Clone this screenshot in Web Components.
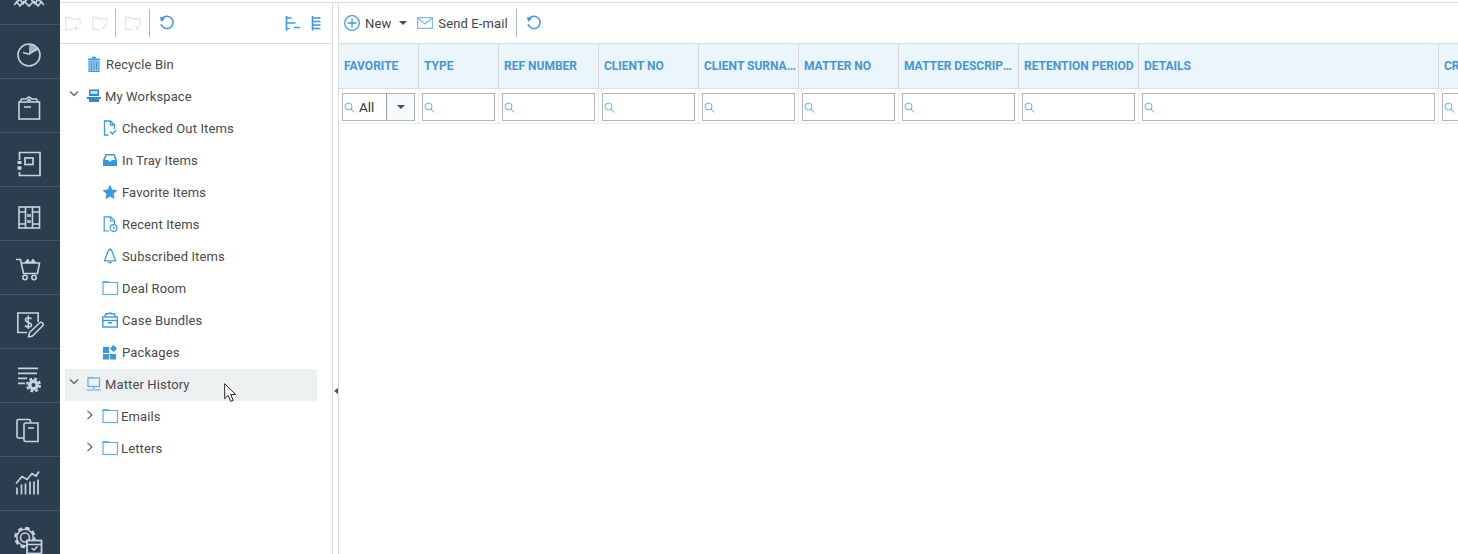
<!DOCTYPE html>
<html lang="en">
<head>
<meta charset="utf-8">
<title>Matter History</title>
<style>
html,body{margin:0;height:100%;background:#fff;overflow:hidden}
body{font-family:Roboto,"Liberation Sans",sans-serif;font-size:13px;color:#444}
</style>
</head>
<body>
<x-app>
  <x-rail slot="rail">
    <x-rail-item name="crown" first></x-rail-item>
    <x-rail-item name="clock"></x-rail-item>
    <x-rail-item name="box"></x-rail-item>
    <x-rail-item name="notebook"></x-rail-item>
    <x-rail-item name="books"></x-rail-item>
    <x-rail-item name="cart"></x-rail-item>
    <x-rail-item name="invoice"></x-rail-item>
    <x-rail-item name="listgear"></x-rail-item>
    <x-rail-item name="docs"></x-rail-item>
    <x-rail-item name="chart"></x-rail-item>
    <x-rail-item name="gearcal"></x-rail-item>
  </x-rail>
  <x-tree-panel slot="tree">
    <x-toolbar>
      <x-icon name="foldernew" style="margin-left:5px"></x-icon>
      <x-icon name="folderedit" style="margin-left:11px"></x-icon>
      <x-sep style="margin:0 9px 0 7px"></x-sep>
      <x-icon name="folderdel"></x-icon>
      <x-sep style="margin:0 9px 0 8px"></x-sep>
      <x-icon name="refresh"></x-icon>
      <x-icon name="collapse" style="margin-left:auto"></x-icon>
      <x-icon name="expand" style="margin:0 5px 0 10px"></x-icon>
    </x-toolbar>
    <x-tree>
      <x-tree-row icon="bin" leaf>Recycle Bin</x-tree-row>
      <x-tree-row icon="workspace" chevron="down">My Workspace</x-tree-row>
      <x-tree-row level="1" icon="checked" leaf>Checked Out Items</x-tree-row>
      <x-tree-row level="1" icon="tray" leaf>In Tray Items</x-tree-row>
      <x-tree-row level="1" icon="star" leaf>Favorite Items</x-tree-row>
      <x-tree-row level="1" icon="recent" leaf>Recent Items</x-tree-row>
      <x-tree-row level="1" icon="bell" leaf>Subscribed Items</x-tree-row>
      <x-tree-row level="1" icon="folder" leaf>Deal Room</x-tree-row>
      <x-tree-row level="1" icon="casebox" leaf>Case Bundles</x-tree-row>
      <x-tree-row level="1" icon="packages" leaf>Packages</x-tree-row>
      <x-tree-row icon="monitor" chevron="down" active>Matter History</x-tree-row>
      <x-tree-row level="1" icon="folder" chevron="right">Emails</x-tree-row>
      <x-tree-row level="1" icon="folder" chevron="right">Letters</x-tree-row>
    </x-tree>
  </x-tree-panel>
  <x-splitter slot="split"></x-splitter>
  <x-grid-panel slot="main">
    <x-toolbar>
      <x-icon name="plus" style="margin-left:5px"></x-icon>
      <x-label style="margin-left:5px">New</x-label>
      <x-caret style="margin-left:8px"></x-caret>
      <x-icon name="mail" style="margin-left:10px"></x-icon>
      <x-label style="margin-left:5px">Send E-mail</x-label>
      <x-sep style="margin:0 9px 0 8px"></x-sep>
      <x-icon name="refresh"></x-icon>
    </x-toolbar>
    <x-data-grid>
      <x-col w="80" filter="select">Favorite</x-col>
      <x-col w="80">Type</x-col>
      <x-col w="100">Ref Number</x-col>
      <x-col w="100">Client No</x-col>
      <x-col w="100">Client Surname</x-col>
      <x-col w="100">Matter No</x-col>
      <x-col w="120">Matter Description</x-col>
      <x-col w="120">Retention Period</x-col>
      <x-col w="300">Details</x-col>
      <x-col w="120">Cr</x-col>
    </x-data-grid>
  </x-grid-panel>
  <x-cursor slot="over"></x-cursor>
</x-app>

<script>
const S = 'fill="none" stroke="currentColor"';
const F = 'fill="currentColor"';
const B = 'color:#3a98e0';
const ICONS = {
  /* left rail, 24 box */
  crown:`<g ${S} stroke-width="1.600" transform="translate(0 -8)"><path d="M-3 13 3 7 6 12 12 5 18 12 21 7 27 13"/><path d="M-1 9 3 14 7 9M7 9 12 14 17 9M17 9 21 14 25 9"/></g>`,
  clock:`<g ${S} stroke-width="1.600"><circle cx="12" cy="12" r="11"/><path d="M6 9.600 12 11.200 20 6"/></g><path ${F} opacity=".75" d="M12 1.500A10.500 10.500 0 0 1 21.400 7L12 10.500Z"/>`,
  box:`<g ${S} stroke-width="1.600"><rect x="2" y="5" width="20.500" height="17"/><path d="M7 10h7"/><path d="M3 5 4.500 2H9l3-2 3 2h4.500L21 5"/></g><path ${F} d="M9.500 4l2.500-2.500L14.500 4z"/>`,
  notebook:`<g ${S} stroke-width="1.700"><path d="M2.500 5V1.500h20.500v23H2.500V21"/><rect x="8" y="7" width="8" height="6.500"/><path d="M2.500 5v4M2.500 15v4"/></g><path ${F} d="M.5 10h4v3h-4zM.5 15.500h4v3h-4z"/>`,
  books:`<g ${S} stroke-width="1.600"><rect x="2" y="2" width="20.500" height="21"/><path d="M8.500 2v21M15.500 2v21M2 7h6.500M15.500 7h7M2 19h6.500M15.500 19h7M11 9v3M11 15v3M13 9v3M13 15v3"/></g>`,
  cart:`<g ${S} stroke-width="1.600"><path d="M-1 .5h4.500l3 14h14l2-10.500H4.500"/><circle cx="8" cy="18.500" r="2.200"/><circle cx="17" cy="18.500" r="2.200"/></g><path ${F} d="M7 4l4-4.500 2.500 4.500zM12.500 4l3.500-4.500 3.500 4.500z"/>`,
  invoice:`<g ${S} stroke-width="1.600"><path d="M10 19.500H.8V0h20.400v9"/><path d="M14.500 6c-1-1.800-6-1.800-6 1 0 3 6 1.800 6 5 0 2.800-5.500 2.300-6.500.5M11.300 2.500v13.500"/><path stroke-linejoin="round" d="M11.500 24 12.500 19.500 22.500 10a2 2 0 0 1 3 3L15.500 23z"/></g>`,
  listgear:`<g ${S} stroke-width="1.700"><path d="M1 1.300h20M1 6.300h19M1 11.300h9M1 16.300h7"/><circle cx="16.500" cy="18" r="3.700" stroke-width="3.400"/><circle cx="16.500" cy="18" r="6.300" stroke-width="2.400" stroke-dasharray="2.800 2.150"/></g>`,
  docs:`<g ${S} stroke-width="1.600"><path d="M7 17H1.500A1.500 1.500 0 0 1 0 15.500V0A1.500 1.500 0 0 1 1.500-1.500H12A1.500 1.500 0 0 1 13.500 0V2"/><path d="M7 3.500A1.500 1.500 0 0 1 8.500 2H21V20.500H8.500A1.500 1.500 0 0 1 7 19zM11 7h6"/></g>`,
  chart:`<g ${S} stroke-width="1.700" transform="translate(-2 -3.500)"><path d="M1 12 7 5l5 3 5-6 4 2.500L24 0M2 23v-7M6.500 23V13M10.500 23V12M15 23V10M19 23V10M23 23V8"/></g>`,
  gearcal:`<g ${S} stroke-width="1.600"><circle cx="8" cy="8.500" r="4.500"/><circle cx="8" cy="8.500" r="8.200"/><circle cx="8" cy="8.500" r="9.700" stroke-width="2.200" stroke-dasharray="4.500 3.120"/><rect x="10" y="11.500" width="14.500" height="13" fill="#2c3d4f" stroke-width="1.800"/><path d="M10 15.500h14.500M14.500 19l2.500 2 3.500-3.500"/></g>`,
  /* toolbars, 16 box */
  foldernew:`<g ${S} style="color:#e3e6e8" stroke-width="1.300"><path d="M8 14.500H.7V2.500h5l1.500 1.500h8v6"/><path d="M11 11v4.500M8.500 13.200h5"/></g>`,
  folderedit:`<g ${S} style="color:#e3e6e8" stroke-width="1.300"><path d="M8 14.500H.7V2.500h5l1.500 1.500h8v3"/><path d="M10 14.500l5-6"/></g>`,
  folderdel:`<g ${S} style="color:#e3e6e8" stroke-width="1.300"><path d="M8 14.500H.7V2.500h5l1.500 1.500h8v7"/><path d="M10.500 11.500l3.500 3.500M14 11.500l-3.500 3.500"/></g>`,
  refresh:`<g ${S} style="${B}" stroke-width="1.500"><path d="M3.200 3.300a6.200 6.200 0 1 1-1.200 6"/></g><path style="${B}" ${F} d="M1 1.800 6 3.400 2 7z"/>`,
  collapse:`<g ${S} style="${B}" stroke-width="1.600"><path d="M1.500 1v14.500M1.500 3h5M1.500 8h9M1.500 13.500h3M9 12.500h6"/></g>`,
  expand:`<g ${S} style="${B}" stroke-width="1.600"><path d="M1.500 1v14.500M1.500 3h8M1.500 6.500h8M1.500 10h8M1.500 13.500h8"/></g>`,
  plus:`<g ${S} style="${B}" stroke-width="1.300"><circle cx="8" cy="8" r="7.300"/><path d="M8 3.500v9M3.500 8h9"/></g>`,
  mail:`<g ${S} style="color:#7cbce8" stroke-width="1.200"><rect x=".6" y="2.600" width="14.800" height="10.800"/><path d="M1 3l7 6 7-6"/></g>`,
  /* tree, 16 box */
  bin:`<g style="${B}"><path ${F} d="M2 2.500h12V4H2zM6 .8h4v1.500H6z"/><rect x="3" y="5" width="10" height="10.500" fill="#8ec8f0" stroke="currentColor"/><path ${S} d="M5.500 6.500v7.500M8 6.500v7.500M10.500 6.500v7.500"/></g>`,
  workspace:`<g style="color:#2f8ad0" ${F}><rect x="3" y="1.500" width="10" height="6.500"/><rect x="1" y="9" width="14" height="2"/><rect x="3" y="11" width="10" height="3"/></g><rect x="4.500" y="3" width="7" height="3" fill="#bfe0f6"/>`,
  checked:`<g ${S} style="${B}" stroke-width="1.300"><path d="M6.500 15H2.500V1h6l4 4v4"/><path d="M8.500 1v4h4"/><path d="M8 11.500l2.500 2.500 3.500-4"/></g>`,
  tray:`<g style="${B}"><path ${F} fill-rule="evenodd" d="M3.500 2h9l2.500 6v6H1V8zM4.500 3.500 3 8h3.500a1.500 1.500 0 0 0 3 0H13l-1.500-4.500z"/></g>`,
  star:`<path style="${B}" ${F} d="M8 .8l2.200 4.800 5.300.6-3.900 3.600 1 5.200L8 12.600l-4.600 2.600 1-5.200L.5 6.200l5.300-.6z"/>`,
  recent:`<g ${S} style="${B}" stroke-width="1.200"><path d="M7 15H2.200V.8h6.500l3.800 3.900V8"/><path d="M8.500 1v4h4"/><circle cx="11.500" cy="12" r="3.400"/><path d="M11.500 10.200V12h1.600"/></g>`,
  bell:`<g ${S} style="${B}" stroke-width="1.300"><path d="M8 1.500c-1.500 0-2 1.200-2.500 3.200L2.500 12.800h11L10.500 4.700C10 2.700 9.500 1.500 8 1.500zM8 .2V1.500M6.200 14.600h3.600"/></g>`,
  folder:`<g style="color:#5bb0ea"><path ${F} d="M.5 1h6l1.200 1.500h-7z"/><rect x="1" y="2.500" width="14.500" height="12" fill="#fff" stroke="currentColor" stroke-width="1.200"/></g>`,
  casebox:`<g ${S} style="${B}" stroke-width="1.400"><rect x=".8" y="5" width="14.500" height="10"/><path d="M.8 8.500h14.500"/><path d="M2.500 4.500 4 1.800h2.500l1.500-1 1.500 1H12l1.500 2.700"/></g><path style="${B}" ${F} d="M6 10h4v1.500H6z"/>`,
  packages:`<g style="${B}" ${F}><rect x="1" y="3" width="6" height="6"/><rect x="1" y="10" width="6" height="5.500"/><rect x="8" y="10" width="6" height="5.500"/><path d="M11.500 1l3.500 3.500L11.500 8 8 4.500z"/></g>`,
  monitor:`<g ${S} style="color:#5bb0ea" stroke-width="1.200"><rect x="2" y="2" width="11.500" height="8.500"/><path d="M7.700 10.500v2.500M.5 14h14.500"/></g><path style="color:#5bb0ea" ${F} d="M1.500 1h5l.8 1h-5.800z"/>`,
};

function svg(name, w, h){
  return `<svg xmlns="http://www.w3.org/2000/svg" width="${w}" height="${h}" viewBox="0 0 ${w} ${h}" aria-hidden="true" style="display:block;overflow:visible">${ICONS[name]||''}</svg>`;
}
class Base extends HTMLElement{
  constructor(){super();this.attachShadow({mode:'open'});}
  connectedCallback(){this.render&&this.render();}
}
const def=(n,render)=>customElements.define(n,class extends Base{render(){render.call(this);}});

def('x-app',function(){this.shadowRoot.innerHTML=`<style>
:host{display:flex;position:relative;width:100vw;height:100vh;overflow:hidden}
.work{flex:1;min-width:0;display:flex;margin-top:2px;border-top:1px solid #ddd;height:calc(100% - 3px)}
::slotted([slot=main]){flex:1;min-width:0}
</style><slot name="rail"></slot><div class="work"><slot name="tree"></slot><slot name="split"></slot><slot name="main"></slot></div><slot name="over"></slot>`;});

def('x-rail',function(){this.shadowRoot.innerHTML=`<style>
:host{display:flex;flex-direction:column;flex:none;width:60px;height:100%;background:#2c3d4f;overflow:hidden;color:#c6d3e2}
</style><slot></slot>`;});

def('x-rail-item',function(){
  const first=this.hasAttribute('first');
  this.shadowRoot.innerHTML=`<style>
:host{display:flex;flex:none;box-sizing:border-box;height:${first?25:54}px;border-bottom:1px solid #44566a;justify-content:center;align-items:${first?'flex-start':'center'};padding:${first?'0 2px 0 0':'6px 2px 0 0'};overflow:hidden}
</style>${svg(this.getAttribute('name'),24,24)}`;});

def('x-icon',function(){this.shadowRoot.innerHTML=`<style>:host{display:block;flex:none;width:16px;height:16px;color:#3a98e0}</style>${svg(this.getAttribute('name'),16,16)}`;});

def('x-toolbar',function(){this.shadowRoot.innerHTML=`<style>
:host{display:flex;align-items:center;flex:none;height:40px;box-sizing:content-box;border-bottom:1px solid #ddd;color:#444}
</style><slot></slot>`;});

def('x-sep',function(){this.shadowRoot.innerHTML=`<style>:host{display:block;flex:none;width:1px;height:28px;background:#a9b9c9}</style>`;});
def('x-label',function(){this.shadowRoot.innerHTML=`<style>:host{display:block;flex:none;font:13px Roboto,"Liberation Sans",sans-serif;letter-spacing:.13px;color:#444;white-space:nowrap}</style><slot></slot>`;});
def('x-caret',function(){this.shadowRoot.innerHTML=`<style>:host{display:block;flex:none;width:0;height:0;border:4px solid transparent;border-bottom:0;border-top:4px solid #3f4d5c}</style>`;});

def('x-tree-panel',function(){this.shadowRoot.innerHTML=`<style>
:host{display:flex;flex-direction:column;flex:none;width:272px;border-right:1px solid #ddd;background:#fff}
</style><slot></slot>`;});
def('x-tree',function(){this.shadowRoot.innerHTML=`<style>
:host{display:block;padding:5px 15px 0 5px}
</style><slot></slot>`;});

const CHEV={down:'M1 1.500 5 5.500 9 1.500',right:'M2.500 .8 7 5 2.500 9.200'};
def('x-tree-row',function(){
  const lv=+(this.getAttribute('level')||0), ch=this.getAttribute('chevron'), leaf=this.hasAttribute('leaf'), act=this.hasAttribute('active');
  this.shadowRoot.innerHTML=`<style>
:host{display:flex;align-items:center;box-sizing:border-box;height:32px;padding:0 0 2px ${1+16*lv}px;background:${act?'#edf0f1':'transparent'};font:13px Roboto,"Liberation Sans",sans-serif;letter-spacing:.13px;color:#4a4a4a;white-space:nowrap}
.ch{flex:none;width:16px;height:16px;display:flex;align-items:center;justify-content:center;margin-top:-3px;color:#555}
.ic{flex:none;width:16px;height:16px;margin:0 ${leaf?4:3}px 0 4px}
</style><span class="ch">${ch?`<svg width="10" height="10" viewBox="0 0 10 10" fill="none" stroke="currentColor" stroke-width="1.100"><path d="${CHEV[ch]}"/></svg>`:''}</span><span class="ic">${svg(this.getAttribute('icon'),16,16)}</span><slot></slot>`;});

def('x-splitter',function(){this.shadowRoot.innerHTML=`<style>
:host{display:flex;flex:none;width:5px;border-right:1px solid #ddd;align-items:flex-start;justify-content:center;padding-top:385px;box-sizing:content-box;height:calc(100% - 385px)}
i{display:block;width:0;height:0;border:3px solid transparent;border-left:0;border-right:4px solid #3f4d5c}
</style><i></i>`;});

def('x-grid-panel',function(){this.shadowRoot.innerHTML=`<style>
:host{display:flex;flex-direction:column;background:#fff;overflow:hidden}
</style><slot></slot>`;});

def('x-data-grid',function(){this.shadowRoot.innerHTML=`<style>
:host{display:flex;align-items:flex-start;overflow:hidden;flex:none}
</style><slot></slot>`;});

const GLASS=`<svg width="11" height="11" viewBox="0 0 11 11" fill="none" stroke="#5bb0ea" stroke-width="1" style="display:block;flex:none;margin-left:-1px"><circle cx="4.500" cy="4.500" r="3.500"/><path d="M7 7 10.500 10.500"/></svg>`;
def('x-col',function(){
  const w=+this.getAttribute('w'), sel=this.getAttribute('filter')==='select';
  this.shadowRoot.innerHTML=`<style>
:host{display:block;flex:none;width:${w}px;box-sizing:border-box}
.h{box-sizing:border-box;height:45px;background:#eaf5fc;border-right:1px solid #d6dadd;border-bottom:1px solid #dcdfe1;padding:0 1px 0 5px;font:700 12px/44px Roboto,"Liberation Sans",sans-serif;color:#4a94d6;text-transform:uppercase;white-space:nowrap;overflow:hidden;text-overflow:ellipsis}
.f{box-sizing:border-box;height:35px;padding:4px 3px 2px;border-right:1px solid #eee;border-bottom:1px solid #eee}
.box{box-sizing:border-box;display:flex;align-items:center;height:28px;border:1px solid #b4b4b4;background:#fff;padding-left:2px}
.v{font:13.500px Roboto,"Liberation Sans",sans-serif;color:#333;margin-left:4px;flex:1}
.b{align-self:stretch;width:27px;flex:none;background:#f5fafd;border-left:1px solid #9a9a9a;display:flex;align-items:center;justify-content:center}
.b i{display:block;width:0;height:0;border:4px solid transparent;border-bottom:0;border-top:4px solid #3f4d5c}
</style><div class="h"><slot></slot></div><div class="f"><div class="box">${GLASS}${sel?'<span class="v">All</span><span class="b"><i></i></span>':''}</div></div>`;});

def('x-cursor',function(){this.shadowRoot.innerHTML=`<style>
:host{position:absolute;left:224px;top:383px;width:14px;height:20px;pointer-events:none}
</style><svg width="14" height="20" viewBox="0 0 14 20" style="display:block"><path d="M.7.7v15l3.500-3.300 2.500 6 2.500-1-2.500-5.900h5z" fill="#fff" stroke="#222" stroke-width="1"/></svg>`;});
</script>
</body>
</html>
